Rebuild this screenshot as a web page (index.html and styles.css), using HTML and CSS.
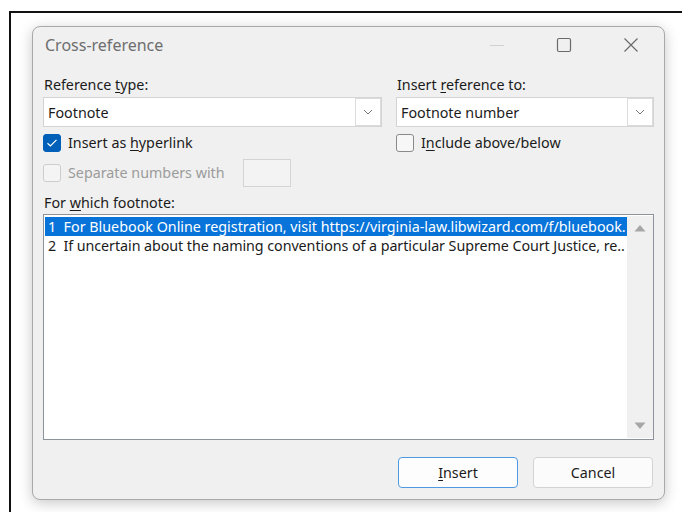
FILE: index.html
```html
<!DOCTYPE html>
<html lang="en">
<head>
<meta charset="utf-8">
<title>Cross-reference</title>
<link rel="stylesheet" href="styles.css">
</head>
<body>
<div class="frame">
  <div class="dialog">
    <div class="titlebar">
      <div class="title">Cross-reference</div>
      <div class="controls">
        <div class="ctl">
          <svg width="16" height="16" viewBox="0 0 16 16"><path d="M1 8.5H15" stroke="#d0d0d0" stroke-width="1"/></svg>
        </div>
        <div class="ctl">
          <svg width="16" height="16" viewBox="0 0 16 16"><rect x="1.5" y="1.5" width="13" height="13" rx="1.5" fill="none" stroke="#6a6a6a" stroke-width="1.2"/></svg>
        </div>
        <div class="ctl">
          <svg width="16" height="16" viewBox="0 0 16 16"><path d="M1.5 1.5L14.5 14.5M14.5 1.5L1.5 14.5" stroke="#6a6a6a" stroke-width="1.2"/></svg>
        </div>
      </div>
    </div>

    <div class="body">
      <div class="columns">
        <div class="col col-left">
          <div class="label">Reference <u>t</u>ype:</div>
          <div class="combo">
            <span class="combo-text">Footnote</span>
            <span class="combo-btn">
              <svg width="10" height="6" viewBox="0 0 10 6"><path d="M1 1L5 5L9 1" fill="none" stroke="#777" stroke-width="1"/></svg>
            </span>
          </div>
          <div class="check-row">
            <span class="box box-checked">
              <svg width="12" height="10" viewBox="0 0 12 10"><path d="M1.5 5.2L4.4 8L10.5 1.8" fill="none" stroke="#fff" stroke-width="1.2"/></svg>
            </span>
            <span class="check-label">Insert as <u>h</u>yperlink</span>
          </div>
          <div class="check-row sep-row">
            <span class="box box-disabled"></span>
            <span class="check-label disabled">Separate numbers with</span>
            <span class="sep-input"></span>
          </div>
        </div>
        <div class="col col-right">
          <div class="label">Insert <u>r</u>eference to:</div>
          <div class="combo">
            <span class="combo-text">Footnote number</span>
            <span class="combo-btn">
              <svg width="10" height="6" viewBox="0 0 10 6"><path d="M1 1L5 5L9 1" fill="none" stroke="#777" stroke-width="1"/></svg>
            </span>
          </div>
          <div class="check-row">
            <span class="box"></span>
            <span class="check-label">I<u>n</u>clude above/below</span>
          </div>
        </div>
      </div>

      <div class="label list-label">For <u>w</u>hich footnote:</div>
      <div class="listbox">
        <div class="items">
          <div class="item selected">1&nbsp;&nbsp;For Bluebook Online registration, visit https://virginia-law.libwizard.com/f/bluebook.</div>
          <div class="item item-tight">2&nbsp;&nbsp;If uncertain about the naming conventions of a particular Supreme Court Justice, re..</div>
        </div>
        <div class="scrollbar">
          <svg width="12" height="8" viewBox="0 0 12 8"><path d="M0.5 7.5L6 1L11.5 7.5Z" fill="#a6a6a6"/></svg>
          <svg width="12" height="8" viewBox="0 0 12 8"><path d="M0.5 0.5L6 7L11.5 0.5Z" fill="#a6a6a6"/></svg>
        </div>
      </div>

      <div class="buttons">
        <button class="btn btn-default"><u>I</u>nsert</button>
        <button class="btn">Cancel</button>
      </div>
    </div>
  </div>
</div>
</body>
</html>
```

FILE: styles.css
```css
html, body {
  margin: 0;
  padding: 0;
  background: #ffffff;
}

body {
  width: 682px;
  height: 512px;
  overflow: hidden;
  font-family: "Noto Sans", "Open Sans", sans-serif;
  font-size: 14.3px;
  color: #1b1b1b;
}

u {
  text-decoration: underline;
  text-underline-offset: 2px;
}

.frame {
  margin: 11px 0 0 9px;
  height: 501px;
  border-top: 2px solid #111;
  border-left: 2px solid #111;
  box-sizing: border-box;
  padding: 13px 0 0 21px;
}

.dialog {
  width: 633px;
  height: 474px;
  box-sizing: border-box;
  background: #f0f0f0;
  border: 1px solid #a9a9a9;
  border-radius: 8px;
  box-shadow: 0 3px 14px rgba(0, 0, 0, 0.22);
  display: flex;
  flex-direction: column;
}

/* title bar */
.titlebar {
  height: 48px;
  display: flex;
  justify-content: space-between;
  align-items: flex-start;
}

.title {
  padding: 8px 0 0 12px;
  line-height: 20px;
  font-size: 16px;
  color: #6e6e6e;
}

.controls {
  display: flex;
}

.ctl {
  width: 67px;
  height: 36px;
  display: flex;
  align-items: center;
  justify-content: center;
}

.ctl svg {
  display: block;
}

/* body */
.body {
  padding: 0 10px 11px 10px;
  display: flex;
  flex-direction: column;
  flex: 1;
}

.columns {
  display: grid;
  grid-template-columns: 339px 258px;
  column-gap: 14px;
}

.col {
  display: flex;
  flex-direction: column;
}

.label {
  height: 20px;
  line-height: 20px;
  padding-left: 1px;
}

.combo {
  margin-top: 2px;
  height: 30px;
  box-sizing: border-box;
  background: #fff;
  border: 1px solid #d4d4d4;
  display: flex;
  align-items: stretch;
}

.combo-text {
  flex: 1;
  padding: 1px 0 0 4px;
  line-height: 28px;
}

.combo-btn {
  width: 26px;
  box-sizing: border-box;
  border: 1px solid #dcdcdc;
  background: #fff;
  display: flex;
  align-items: center;
  justify-content: center;
}

.check-row {
  margin-top: 7px;
  height: 18px;
  display: flex;
  align-items: center;
}

.box {
  width: 18px;
  height: 18px;
  box-sizing: border-box;
  border: 1px solid #8a8a8a;
  border-radius: 3px;
  background: #f7f7f7;
  display: flex;
  align-items: center;
  justify-content: center;
  flex: none;
}

.box-checked {
  background: #005fb8;
  border-color: #005fb8;
}

.box-disabled {
  border-color: #cdcdcd;
  background: #f4f4f4;
}

.check-label {
  margin-left: 7px;
  line-height: 18px;
}

.disabled {
  color: #9b9b9b;
}

.sep-row {
  height: 28px;
}

.sep-input {
  margin-left: 18px;
  width: 48px;
  height: 28px;
  box-sizing: border-box;
  border: 1px solid #d4d4d4;
  background: #f3f3f3;
}

.list-label {
  margin-top: 6px;
}

/* footnote list */
.listbox {
  margin-top: 1px;
  height: 226px;
  box-sizing: border-box;
  border: 1px solid #8d939b;
  background: #fff;
  display: flex;
  padding: 1px 0 1px 1px;
}

.items {
  flex: 1;
  min-width: 0;
  padding-top: 1px;
}

.item {
  height: 19px;
  line-height: 19px;
  padding-left: 3px;
  white-space: nowrap;
}

.item-tight {
  letter-spacing: -0.06px;
}

.selected {
  background: #0874d9;
  color: #fff;
}

.scrollbar {
  width: 26px;
  background: #f0f0f0;
  display: flex;
  flex-direction: column;
  justify-content: space-between;
  align-items: center;
  padding: 8px 0 8px 0;
  box-sizing: border-box;
}

.scrollbar svg {
  display: block;
}

/* dialog buttons */
.buttons {
  margin-top: 17px;
  display: flex;
  justify-content: flex-end;
  gap: 15px;
  padding-right: 1px;
}

.btn {
  width: 120px;
  height: 31px;
  box-sizing: border-box;
  border: 1px solid #d3d3d3;
  border-radius: 4px;
  background: #fbfbfb;
  font-family: inherit;
  font-size: 14.3px;
  color: #1b1b1b;
  padding: 0;
}

.btn-default {
  border-color: #4d9ae0;
  background: #fdfdfd;
}
```
